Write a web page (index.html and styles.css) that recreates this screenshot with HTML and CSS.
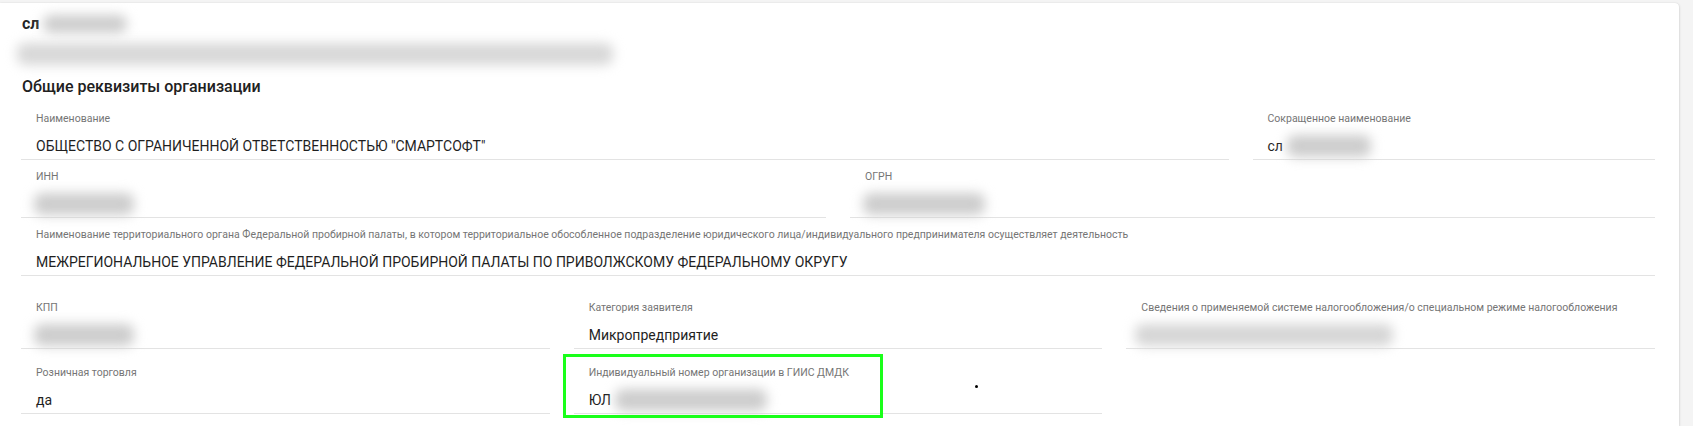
FILE: index.html
```html
<!DOCTYPE html>
<html lang="ru">
<head>
<meta charset="utf-8">
<title>Общие реквизиты организации</title>
<link rel="stylesheet" href="styles.css">
</head>
<body>
<div class="card">
  <div class="title">сл<span class="blur blur-title"></span></div>
  <div class="subtitle"><span class="blur blur-sub"></span></div>
  <div class="section-title">Общие реквизиты организации</div>

  <div class="row row-1 cols-3-1">
    <div class="field">
      <div class="label">Наименование</div>
      <div class="value">ОБЩЕСТВО С ОГРАНИЧЕННОЙ ОТВЕТСТВЕННОСТЬЮ "СМАРТСОФТ"</div>
    </div>
    <div class="field">
      <div class="label">Сокращенное наименование</div>
      <div class="value">сл<span class="blur blur-short"></span></div>
    </div>
  </div>

  <div class="row row-2 cols-2">
    <div class="field">
      <div class="label">ИНН</div>
      <div class="value"><span class="blur blur-inn"></span></div>
    </div>
    <div class="field">
      <div class="label">ОГРН</div>
      <div class="value"><span class="blur blur-ogrn"></span></div>
    </div>
  </div>

  <div class="row row-3 cols-1">
    <div class="field">
      <div class="label">Наименование территориального органа Федеральной пробирной палаты, в котором территориальное обособленное подразделение юридического лица/индивидуального предпринимателя осуществляет деятельность</div>
      <div class="value">МЕЖРЕГИОНАЛЬНОЕ УПРАВЛЕНИЕ ФЕДЕРАЛЬНОЙ ПРОБИРНОЙ ПАЛАТЫ ПО ПРИВОЛЖСКОМУ ФЕДЕРАЛЬНОМУ ОКРУГУ</div>
    </div>
  </div>

  <div class="row row-4 cols-3">
    <div class="field">
      <div class="label">КПП</div>
      <div class="value"><span class="blur blur-kpp"></span></div>
    </div>
    <div class="field">
      <div class="label">Категория заявителя</div>
      <div class="value">Микропредприятие</div>
    </div>
    <div class="field">
      <div class="label">Сведения о применяемой системе налогообложения/о специальном режиме налогообложения</div>
      <div class="value"><span class="blur blur-tax"></span></div>
    </div>
  </div>

  <div class="row row-5 cols-3">
    <div class="field">
      <div class="label">Розничная торговля</div>
      <div class="value">да</div>
    </div>
    <div class="field">
      <div class="label">Индивидуальный номер организации в ГИИС ДМДК</div>
      <div class="value">ЮЛ<span class="blur blur-giis"></span></div>
      <div class="highlight"></div>
    </div>
  </div>

  <div class="cursor-dot"></div>
</div>
</body>
</html>
```

FILE: styles.css
```css
* {
  box-sizing: border-box;
}

html, body {
  margin: 0;
  padding: 0;
}

body {
  background: #f4f4f4;
  font-family: Roboto, "Noto Sans", "Liberation Sans", sans-serif;
  color: rgba(0, 0, 0, 0.87);
  height: 426px;
  overflow: hidden;
}

.card {
  position: relative;
  margin: 3px 14px 0 0;
  background: #ffffff;
  border-radius: 0 4px 0 0;
  box-shadow: 0 1px 3px rgba(0, 0, 0, 0.18), 0 0 1px rgba(0, 0, 0, 0.12);
  padding: 11px 24px 12px 21px;
  height: 423px;
}

.title {
  display: flex;
  align-items: center;
  font-size: 16px;
  font-weight: 700;
  line-height: 20px;
  height: 20px;
  padding-left: 1px;
}

.subtitle {
  margin-top: 10px;
  height: 20px;
  display: flex;
  align-items: center;
}

.section-title {
  margin-top: 12px;
  font-size: 16px;
  font-weight: 500;
  line-height: 22px;
  padding-left: 1px;
  color: #212121;
}

.blur {
  display: inline-block;
  background: #cdcdcd;
  border-radius: 8px;
  filter: blur(6px);
  vertical-align: middle;
}

.blur-title { width: 84px; height: 18px; margin-left: 4px; }
.blur-sub { width: 596px; height: 22px; margin-left: -4px; background: #d8d8d8; }
.blur-short { width: 84px; height: 22px; margin-left: 4px; }
.blur-inn { width: 100px; height: 22px; margin-left: -2px; }
.blur-ogrn { width: 122px; height: 22px; margin-left: -2px; }
.blur-kpp { width: 100px; height: 22px; margin-left: -2px; }
.blur-tax { width: 258px; height: 22px; margin-left: -6px; background: #d6d6d6; }
.blur-giis { width: 152px; height: 22px; margin-left: 4px; }

.row {
  display: grid;
  column-gap: 24px;
}

.cols-3-1 { grid-template-columns: 3fr 1fr; }
.cols-2 { grid-template-columns: 1fr 1fr; }
.cols-1 { grid-template-columns: 1fr; }
.cols-3 { grid-template-columns: 1fr 1fr 1fr; }

.row-1 { margin-top: 14px; }
.row-2 { margin-top: 10px; }
.row-3 { margin-top: 10px; }
.row-4 { margin-top: 25px; }
.row-5 { margin-top: 17px; }

.field {
  position: relative;
  border-bottom: 1px solid #e3e3e3;
  padding: 0 14px 3px 15px;
}

.label {
  font-size: 10.5px;
  line-height: 14px;
  color: #757575;
  white-space: nowrap;
}

.value {
  margin-top: 10px;
  font-size: 14px;
  line-height: 20px;
  height: 20px;
  color: #1f1f1f;
  white-space: nowrap;
  display: flex;
  align-items: center;
}

.highlight {
  position: absolute;
  left: -11px;
  top: -12px;
  width: 320px;
  height: 64px;
  border: 3px solid #1aff1a;
  pointer-events: none;
}

.cursor-dot {
  position: absolute;
  left: 975px;
  top: 382px;
  width: 3px;
  height: 3px;
  background: #000;
  border-radius: 50%;
}
```
